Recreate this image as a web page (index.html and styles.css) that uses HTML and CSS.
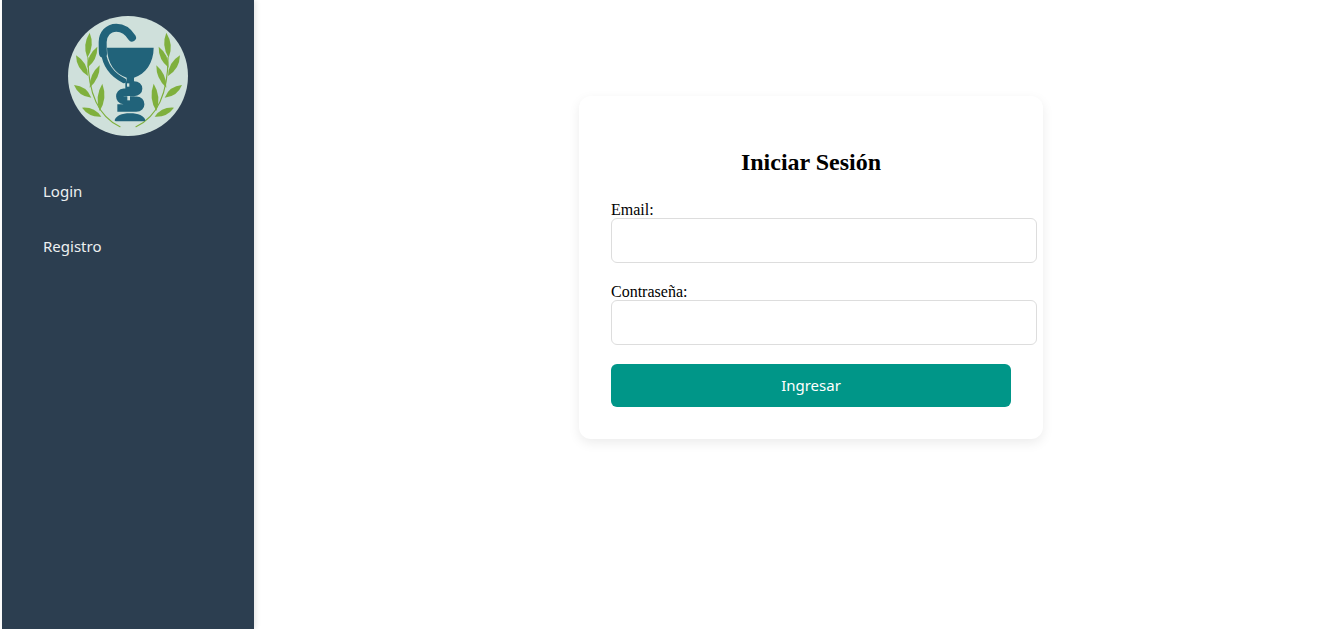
FILE: index.html
```html
<!DOCTYPE html>
<html lang="es">
<head>
<meta charset="utf-8">
<title>Iniciar Sesión</title>
<link rel="stylesheet" href="styles.css">
</head>
<body>
<div class="layout">
  <aside class="sidebar">
    <div class="logo-wrap">
      <svg class="logo" viewBox="0 0 360 360" width="120" height="120" aria-label="Logo">
        <circle cx="180" cy="180" r="180" fill="#cfe0db"/>
        <defs>
          <g id="branch">
            <path d="M156 332C105 308 60 250 60 125" fill="none" stroke="#7fb03d" stroke-width="3.5" stroke-linecap="round"/>
            <path fill="#7fb03d" d="M65 50Q81 88 58 125Q42 87 65 50Z"/>
            <path fill="#7fb03d" d="M88 92Q89 131 58 155Q57 116 88 92Z"/>
            <path fill="#7fb03d" d="M24 118Q59 139 60 180Q25 159 24 118Z"/>
            <path fill="#7fb03d" d="M95 148Q96 188 65 215Q64 174 95 148Z"/>
            <path fill="#7fb03d" d="M18 207Q56 210 70 245Q32 242 18 207Z"/>
            <path fill="#7fb03d" d="M103 203Q119 246 95 285Q79 242 103 203Z"/>
            <path fill="#7fb03d" d="M42 275Q79 272 100 302Q63 304 42 275Z"/>
          </g>
        </defs>
        <use href="#branch"/>
        <use href="#branch" transform="translate(360 0) scale(-1 1)"/>
        <g fill="none" stroke="#21637a" stroke-linecap="round">
          <path d="M192 65C180 45 162 35 145 35C120 35 104 55 104 78C104 92 104 102 105 112" stroke-width="24"/>
          <path d="M106 108C110 142 128 174 168 194" stroke-width="15"/>
        </g>
        <path fill="none" stroke="#21637a" stroke-width="23" d="M172 207H198C216 207 216 229 198 229H167C152 229 152 253 167 253H205C222 253 222 276 205 276H148"/>
        <path fill="#21637a" d="M117 95H257C257 140 232 175 198 185V201H176V185C142 175 117 140 117 95Z"/>
        <path fill="#21637a" d="M140 312C145 300 160 292 186 292C212 292 227 300 232 312C232 315 230 316 226 316H146C142 316 140 315 140 312Z"/>
        <g fill="#cfe0db">
          <rect x="177" y="202" width="7" height="10"/>
          <rect x="178" y="240" width="8" height="13"/>
        </g>
      </svg>
    </div>
    <nav class="menu">
      <a class="menu-link" href="#">Login</a>
      <a class="menu-link" href="#">Registro</a>
    </nav>
  </aside>
  <main class="content">
    <section class="card">
      <h2 class="title">Iniciar Sesión</h2>
      <form class="form">
        <div class="field">
          <label class="label">Email:</label>
          <input class="input" type="email">
        </div>
        <div class="field">
          <label class="label">Contraseña:</label>
          <input class="input" type="password">
        </div>
        <button class="submit" type="button">Ingresar</button>
      </form>
    </section>
  </main>
</div>
</body>
</html>
```
FILE: styles.css
```css
* { box-sizing: border-box; }
html, body { margin: 0; height: 100%; overflow: hidden; background: #fff; }
body { font-family: "Liberation Serif", "Times New Roman", serif; font-size: 16px; color: #000; }
.layout { display: flex; height: 629px; padding-left: 2px; }
.sidebar { width: 252px; flex: none; background: #2c3e50; box-shadow: 2px 0 5px rgba(0,0,0,0.1); padding: 16px 20px; }
.logo-wrap { display: flex; justify-content: center; }
.logo { display: block; flex: none; }
.menu { display: flex; flex-direction: column; margin-top: 29px; padding-left: 6px; }
.menu-link { display: block; height: 55px; padding: 16px 15px 19px; color: #ecf0f1; text-decoration: none; font-family: "Noto Sans", Tahoma, sans-serif; font-size: 15px; line-height: 20px; }
.content { flex: 1; display: flex; justify-content: center; align-items: flex-start; padding: 96px 0 0 27px; }
.card { width: 464px; height: 343px; background: #fff; border-radius: 12px; box-shadow: 0 4px 12px rgba(0,0,0,0.08); padding: 32px; }
.title { margin: 21px 0 0; height: 26px; font-size: 24px; line-height: 26px; font-weight: 700; text-align: center; }
.form { margin-top: 25px; }
.field { margin-bottom: 19px; }
.label { display: block; height: 18px; line-height: 20px; }
.input { display: block; width: 426px; height: 45px; border: 1px solid #ddd; border-radius: 6px; background: #fff; }
.submit { display: block; width: 400px; height: 43px; padding: 0 0 2px; border: 0; border-radius: 6px; background: #009688; color: #fff; font-family: "Noto Sans", Tahoma, sans-serif; font-size: 15px; }
```
